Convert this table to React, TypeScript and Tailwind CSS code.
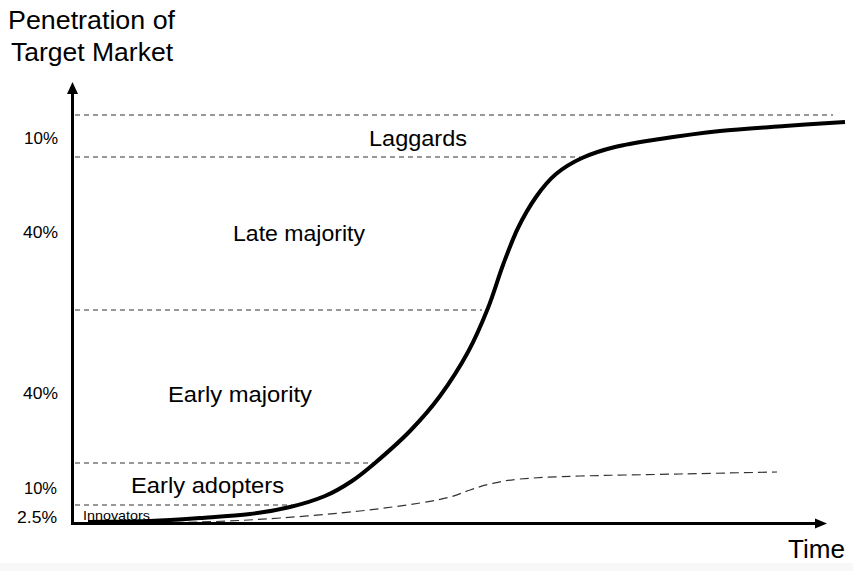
import React from 'react';

type Pt = [number, number];

// smooth path through points (catmull-rom -> bezier)
function smooth(pts: Pt[]) {
  let d = `M ${pts[0][0]} ${pts[0][1]}`;
  for (let i = 0; i < pts.length - 1; i++) {
    const p0 = pts[i - 1] || pts[i];
    const p1 = pts[i];
    const p2 = pts[i + 1];
    const p3 = pts[i + 2] || p2;
    const c1x = p1[0] + (p2[0] - p0[0]) / 6;
    const c1y = p1[1] + (p2[1] - p0[1]) / 6;
    const c2x = p2[0] - (p3[0] - p1[0]) / 6;
    const c2y = p2[1] - (p3[1] - p1[1]) / 6;
    d += ` C ${c1x.toFixed(1)} ${c1y.toFixed(1)}, ${c2x.toFixed(1)} ${c2y.toFixed(1)}, ${p2[0]} ${p2[1]}`;
  }
  return d;
}

const adoption: Pt[] = [
  [88, 522], [150, 521], [200, 518], [250, 514], [290, 507], [325, 496], [352, 481],
  [375, 463], [410, 431], [440, 396], [468, 352], [488, 308], [503, 265], [518, 228],
  [536, 197], [556, 174], [582, 158], [615, 147], [660, 139], [720, 131], [785, 126], [845, 122],
];

const secondary: Pt[] = [
  [90, 523], [200, 522], [280, 518], [360, 511], [420, 503], [450, 497], [470, 490],
  [490, 484], [520, 479], [580, 476], [680, 474], [777, 472],
];

const gridLines = [
  { y: 115, x2: 833 },
  { y: 157, x2: 580 },
  { y: 310, x2: 482 },
  { y: 463, x2: 376 },
  { y: 505, x2: 292 },
];

const labels = [
  { t: 'Penetration of', x: 8, y: 29, w: 167, s: 26 },
  { t: 'Target Market', x: 11, y: 61, w: 162, s: 26 },
  { t: '10%', x: 24, y: 144, w: 34, s: 16.5 },
  { t: '40%', x: 23, y: 238, w: 35, s: 16.5 },
  { t: '40%', x: 23, y: 399, w: 35, s: 16.5 },
  { t: '10%', x: 24, y: 494, w: 33, s: 16.5 },
  { t: '2.5%', x: 17, y: 523, w: 40, s: 16.5 },
  { t: 'Laggards', x: 369, y: 146, w: 98, s: 22 },
  { t: 'Late majority', x: 233, y: 241, w: 132, s: 22 },
  { t: 'Early majority', x: 168, y: 402, w: 144, s: 22 },
  { t: 'Early adopters', x: 131, y: 493, w: 153, s: 22 },
  { t: 'Innovators', x: 83, y: 520, w: 67, s: 13 },
  { t: 'Time', x: 788, y: 558, w: 57, s: 25 },
];

export default function App() {
  return (
    <div className="w-[853px] h-[571px] bg-white flex flex-col overflow-hidden">
      <svg
        width={853}
        height={563}
        viewBox="0 0 853 563"
        className="block font-['Liberation_Sans',Arial,sans-serif]"
      >
        {gridLines.map((g) => (
          <line
            key={g.y}
            x1={75}
            y1={g.y}
            x2={g.x2}
            y2={g.y}
            stroke="#333"
            strokeWidth={1.1}
            strokeDasharray="5 4"
          />
        ))}

        <path d={smooth(secondary)} fill="none" stroke="#333" strokeWidth={1.2} strokeDasharray="9 5" />
        <path d={smooth(adoption)} fill="none" stroke="#000" strokeWidth={4} />

        {/* axes */}
        <line x1={72.5} y1={524.5} x2={72.5} y2={92} stroke="#000" strokeWidth={3} />
        <polygon points="72.5,82 67,94 78,94" fill="#000" />
        <line x1={71} y1={523.5} x2={816} y2={523.5} stroke="#000" strokeWidth={3} />
        <polygon points="827,523.5 815,518.5 815,528.5" fill="#000" />

        {labels.map((l, i) => (
          <text
            key={i}
            x={l.x}
            y={l.y}
            fontSize={l.s}
            textLength={l.w}
            lengthAdjust="spacingAndGlyphs"
            fill="#000"
          >
            {l.t}
          </text>
        ))}
      </svg>
      <div className="h-[8px] bg-[#f8f8f8]" />
    </div>
  );
}
